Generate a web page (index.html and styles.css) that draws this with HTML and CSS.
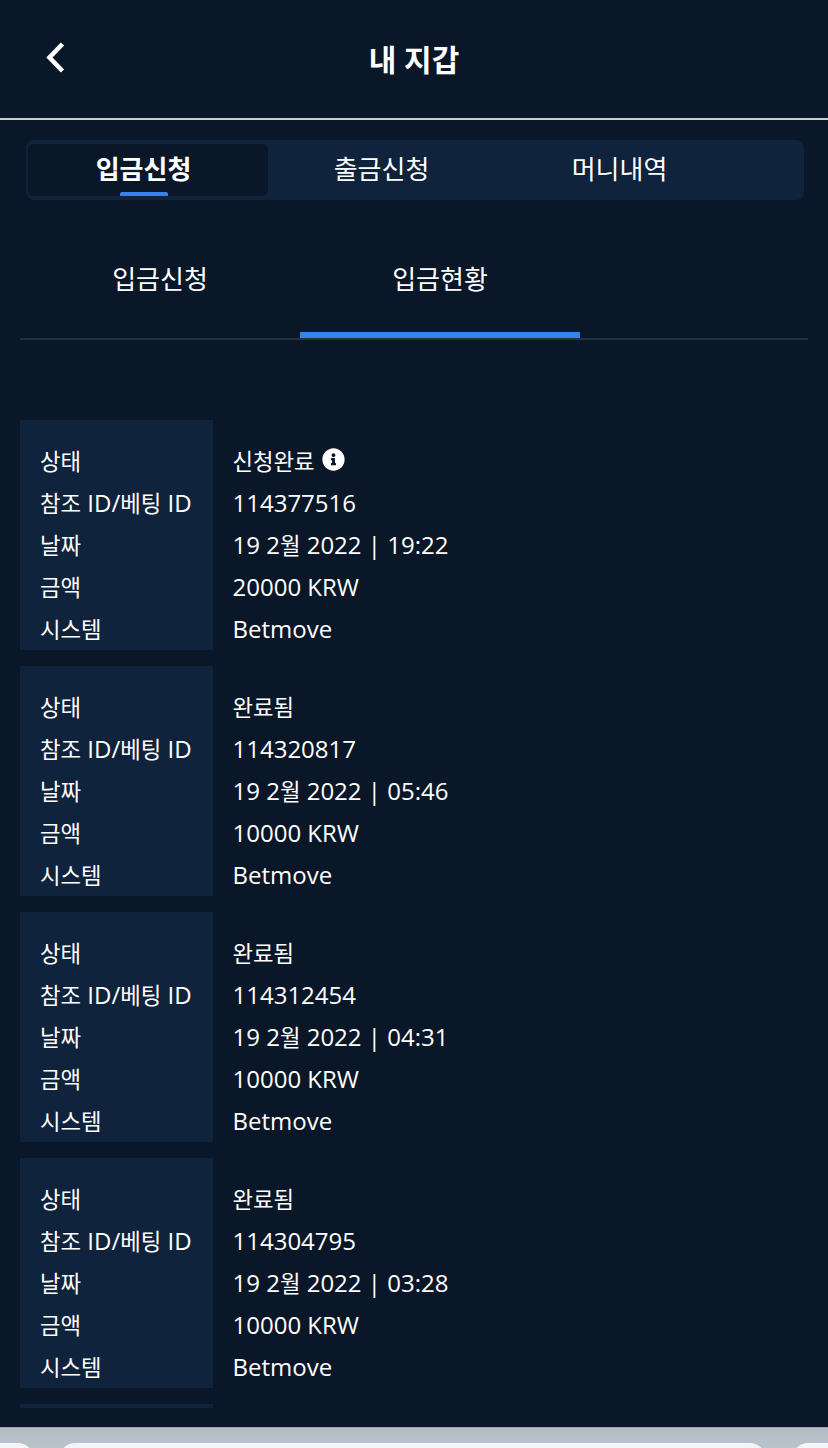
FILE: index.html
```html
<!DOCTYPE html>
<html lang="ko">
<head>
<meta charset="utf-8">
<title>내 지갑</title>
<link rel="stylesheet" href="styles.css">
</head>
<body>
<main class="page">
  <header class="topbar">
    <button class="back" aria-label="뒤로">
      <svg width="24" height="36" viewBox="0 0 24 36"><path d="M18.5 4 L5.5 17.5 L18.5 31" fill="none" stroke="#fff" stroke-width="4.6"/></svg>
    </button>
    <h1 class="title">내 지갑</h1>
  </header>
  <nav class="tabs">
    <a class="tab tab-active">입금신청</a>
    <a class="tab">출금신청</a>
    <a class="tab">머니내역</a>
  </nav>
  <nav class="subtabs">
    <a class="subtab">입금신청</a>
    <a class="subtab subtab-active">입금현황</a>
  </nav>
  <section class="list">
    <div class="card">
      <div class="labels"><div class="ko">상태</div><div><span class="ko">참조</span> ID/<span class="ko">베팅</span> ID</div><div class="ko">날짜</div><div class="ko">금액</div><div class="ko">시스템</div></div>
      <div class="values">
        <div class="status"><span class="ko">신청완료</span>
          <svg class="info" viewBox="0 0 512 512"><path fill="#fff" d="M256 8C119.043 8 8 119.083 8 256c0 136.997 111.043 248 248 248s248-111.003 248-248C504 119.083 392.957 8 256 8zm0 110c23.196 0 42 18.804 42 42s-18.804 42-42 42-42-18.804-42-42 18.804-42 42-42zm56 254c0 6.627-5.373 12-12 12h-88c-6.627 0-12-5.373-12-12v-24c0-6.627 5.373-12 12-12h12v-64h-12c-6.627 0-12-5.373-12-12v-24c0-6.627 5.373-12 12-12h64c6.627 0 12 5.373 12 12v100h12c6.627 0 12 5.373 12 12v24z"/></svg>
        </div>
        <div>114377516</div><div>19 2<span class="ko">월</span> 2022 | 19:22</div><div>20000 KRW</div><div>Betmove</div>
      </div>
    </div>
    <div class="card">
      <div class="labels"><div class="ko">상태</div><div><span class="ko">참조</span> ID/<span class="ko">베팅</span> ID</div><div class="ko">날짜</div><div class="ko">금액</div><div class="ko">시스템</div></div>
      <div class="values"><div class="ko">완료됨</div><div>114320817</div><div>19 2<span class="ko">월</span> 2022 | 05:46</div><div>10000 KRW</div><div>Betmove</div></div>
    </div>
    <div class="card">
      <div class="labels"><div class="ko">상태</div><div><span class="ko">참조</span> ID/<span class="ko">베팅</span> ID</div><div class="ko">날짜</div><div class="ko">금액</div><div class="ko">시스템</div></div>
      <div class="values"><div class="ko">완료됨</div><div>114312454</div><div>19 2<span class="ko">월</span> 2022 | 04:31</div><div>10000 KRW</div><div>Betmove</div></div>
    </div>
    <div class="card">
      <div class="labels"><div class="ko">상태</div><div><span class="ko">참조</span> ID/<span class="ko">베팅</span> ID</div><div class="ko">날짜</div><div class="ko">금액</div><div class="ko">시스템</div></div>
      <div class="values"><div class="ko">완료됨</div><div>114304795</div><div>19 2<span class="ko">월</span> 2022 | 03:28</div><div>10000 KRW</div><div>Betmove</div></div>
    </div>
    <div class="card card-clipped"><div class="labels"></div></div>
  </section>
</main>
<footer class="browserbar">
  <span class="pill pill-left"></span>
  <span class="pill pill-main"></span>
  <span class="pill pill-right"></span>
</footer>
</body>
</html>
```

FILE: styles.css
```css
* { box-sizing: border-box; }
html, body { margin: 0; padding: 0; height: 1448px; overflow: hidden; }
body {
  background: #0a1729;
  color: #fff;
  font-family: "Open Sans", "Noto Sans CJK KR", sans-serif;
  display: flex;
  flex-direction: column;
}
.page { height: 1427px; overflow: hidden; flex: none; }
.topbar {
  height: 120px;
  border-bottom: 2px solid #cfcfcf;
  display: flex;
  align-items: center;
  justify-content: center;
  position: relative;
}
.back {
  position: absolute;
  left: 44px;
  top: 40px;
  width: 24px;
  height: 36px;
  padding: 0;
  border: 0;
  background: none;
  display: block;
}
.back svg { display: block; }
.title { margin: 0; font-size: 30px; font-weight: 700; line-height: 1; transform: translateY(1px); }
.tabs {
  margin: 20px 24px 0 26px;
  height: 60px;
  background: #10233d;
  border-radius: 8px;
  padding: 4px 2px 4px 2px;
  display: flex;
}
.tab {
  width: 240px;
  height: 52px;
  padding-right: 9px;
  font-size: 26px;
  line-height: 50px;
  text-align: center;
  border-radius: 6px;
  position: relative;
  margin-right: -2px;
}
.tab-active { background: #0a1729; font-weight: 700; }
.tab-active::after {
  content: "";
  position: absolute;
  left: 92px;
  bottom: 0;
  width: 48px;
  height: 4px;
  border-radius: 2px 2px 0 0;
  background: #3583f0;
}
.subtabs {
  margin: 32px 20px 0;
  height: 108px;
  border-bottom: 2px solid #232f40;
  display: flex;
}
.subtab {
  width: 280px;
  height: 106px;
  font-size: 26px;
  line-height: 94px;
  text-align: center;
}
.subtab-active { border-bottom: 6px solid #3583f0; }
.list {
  margin: 80px 20px 0;
  display: flex;
  flex-direction: column;
  gap: 16px;
}
.card {
  display: flex;
  height: 230px;
  flex: none;
  font-size: 24px;
  line-height: 42px;
}
.card-clipped { height: 4px; }
.card-clipped .labels { padding: 0; }
.ko { font-size: 22.3px; }
span.ko { line-height: 1; }
div.ko { height: 42px; padding-top: 1px; }
.labels {
  width: 193px;
  background: #10233d;
  padding: 20px 0 0 20px;
  white-space: nowrap;
  overflow: hidden;
}
.values {
  padding: 20px 0 0 19.5px;
  white-space: nowrap;
}
.status { display: flex; align-items: center; gap: 8px; height: 42px; padding-top: 2px; }
.info { width: 23px; height: 23px; flex: none; margin-top: -6px; margin-left: -1px; }
.browserbar {
  height: 21px;
  flex: none;
  background: linear-gradient(#b4bcc5, #bac2ca);
  border-top: 1px solid #9aa3ae;
  position: relative;
  overflow: hidden;
}
.pill { position: absolute; top: 15px; height: 40px; background: #f4f5f6; border-radius: 16px; }
.pill-left { left: -60px; width: 94px; }
.pill-main { left: 59px; width: 707px; }
.pill-right { left: 792px; width: 80px; }
```
